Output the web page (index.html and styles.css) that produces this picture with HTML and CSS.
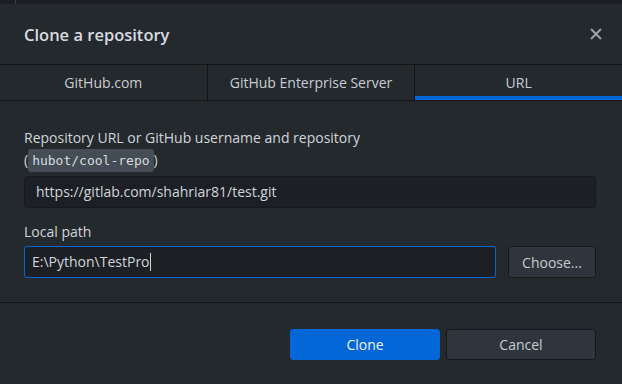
FILE: index.html
```html
<!DOCTYPE html>
<html lang="en">
<head>
  <meta charset="UTF-8" />
  <title>Clone a repository</title>
  <link rel="stylesheet" href="styles.css">
</head>
<body>

<div class="backdrop"><span class="backdrop-line"></span></div>

<div class="dialog">
  <div class="dialog-header">
    <h1>Clone a repository</h1>
    <button class="close" aria-label="Close">
      <svg width="12" height="12" viewBox="0 0 12 12">
        <path d="M1 1 L11 11 M11 1 L1 11" stroke="#99a1a8" stroke-width="2" />
      </svg>
    </button>
  </div>

  <div class="tabs">
    <div class="tab">GitHub.com</div>
    <div class="tab">GitHub Enterprise Server</div>
    <div class="tab selected">URL</div>
  </div>

  <div class="content">
    <label for="url">Repository URL or GitHub username and repository<br>(<code>hubot/cool-repo</code>)</label>
    <div class="text-box">https://gitlab.com/shahriar81/test.git</div>

    <label for="path" class="second">Local path</label>
    <div class="path-row">
      <div class="text-box focused">E:\Python\TestPro<span class="caret"></span></div>
      <button class="btn choose">Choose...</button>
    </div>
  </div>

  <div class="dialog-footer">
    <button class="btn primary">Clone</button>
    <button class="btn">Cancel</button>
  </div>
</div>

</body>
</html>
```

FILE: styles.css
```css
body {
  margin: 0;
  width: 622px;
  height: 384px;
  background: #24292e;
  font-family: 'Open Sans', 'Noto Sans', sans-serif;
  color: #d1d5da;
  overflow: hidden;
}

.backdrop {
  height: 4px;
  background: #1b1e22;
  position: relative;
}

.backdrop-line {
  position: absolute;
  left: 15px;
  top: 0;
  width: 1px;
  height: 4px;
  background: #3a3f45;
}

.dialog-header {
  height: 60px;
  padding: 0 20px 0 24px;
  display: flex;
  align-items: center;
  justify-content: space-between;
  border-bottom: 1px solid #141414;
}

h1 {
  margin: 0;
  font-size: 16.5px;
  font-weight: 600;
  color: #d8dce0;
}

.close {
  background: none;
  border: none;
  padding: 0;
  width: 12px;
  height: 12px;
  display: flex;
}

.tabs {
  display: flex;
  height: 35px;
  border-bottom: 1px solid #141414;
}

.tab {
  flex: 1;
  display: flex;
  align-items: center;
  justify-content: center;
  font-size: 14px;
  color: #c9cdd1;
  border-right: 1px solid #141414;
}

.tab:last-child {
  border-right: none;
}

.tab.selected {
  box-shadow: inset 0 -4px 0 #0366d6;
}

.content {
  padding: 26px 26px 24px 24px;
  border-bottom: 1px solid #141414;
}

label {
  display: block;
  font-size: 14px;
  line-height: 22px;
  color: #d1d5da;
}

label.second {
  margin-top: 13px;
}

code {
  font-family: 'DejaVu Sans Mono', monospace;
  font-size: 13px;
  background: #444c55;
  color: #d7dbdf;
  padding: 4px 4px;
  border-radius: 3px;
}

.text-box {
  margin-top: 4px;
  height: 30px;
  line-height: 30px;
  padding: 0 11px;
  background: #1c2024;
  border: 1px solid #16181b;
  border-radius: 3px;
  font-size: 14px;
  color: #d1d5da;
}

.path-row {
  display: flex;
  gap: 12px;
  margin-top: 3px;
}

.path-row .text-box {
  flex: 1;
  margin-top: 0;
  padding: 0 7px;
}

.text-box.focused {
  border-color: #0366d6;
}

.caret {
  display: inline-block;
  width: 1px;
  height: 18px;
  background: #d1d5da;
  vertical-align: -4px;
}

.btn {
  font-family: inherit;
  font-size: 14px;
  height: 32px;
  background: #2f353c;
  color: #c7cbcf;
  border: 1px solid #16181b;
  border-radius: 3px;
  padding: 0;
}

.choose {
  width: 88px;
}

.dialog-footer {
  display: flex;
  justify-content: flex-end;
  gap: 6px;
  padding: 26px 26px 0 0;
}

.dialog-footer .btn {
  width: 150px;
  height: 31px;
}

.btn.primary {
  background: #0366d6;
  border-color: #0366d6;
  color: #eef4fb;
}
```
